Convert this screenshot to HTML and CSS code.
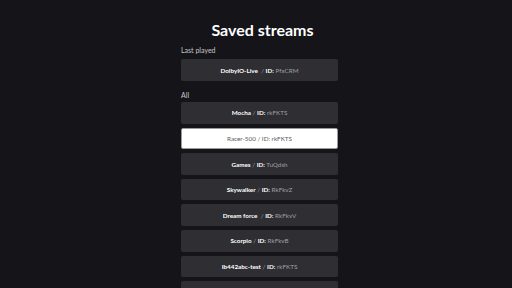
FILE: index.html
```html
<!DOCTYPE html>
<html>
<head>
<meta charset="utf-8">
<link rel="stylesheet" href="styles.css">
</head>
<body>
<div class="page">
  <h1 class="title">Saved streams</h1>
  <div class="label label-first">Last played</div>
  <div class="stream"><span class="text"><b>DolbyIO-Live</b><span class="sep">&nbsp; / </span><b>ID:</b> <span class="id">PfxCRM</span></span></div>
  <div class="label label-all">All</div>
  <div class="list">
    <div class="stream"><span class="text"><b>Mocha</b><span class="sep"> / </span><b>ID:</b> <span class="id">rkFKTS</span></span></div>
    <div class="stream active"><span class="text">Racer-500 / ID: rkFKTS</span></div>
    <div class="stream"><span class="text"><b>Games</b><span class="sep"> / </span><b>ID:</b> <span class="id">TuQdsh</span></span></div>
    <div class="stream"><span class="text"><b>Skywalker</b><span class="sep"> / </span><b>ID:</b> <span class="id">RkFkvZ</span></span></div>
    <div class="stream"><span class="text"><b>Dream force</b><span class="sep">&nbsp; / </span><b>ID:</b> <span class="id">RkFkvV</span></span></div>
    <div class="stream"><span class="text"><b>Scorpio</b><span class="sep"> / </span><b>ID:</b> <span class="id">RkFkvB</span></span></div>
    <div class="stream"><span class="text"><b>Ib442abc-test</b><span class="sep"> / </span><b>ID:</b> <span class="id">rkFKTS</span></span></div>
    <div class="stream"></div>
  </div>
</div>
</body>
</html>
```
FILE: styles.css
```css
html, body {
  margin: 0;
  padding: 0;
  background: #141419;
  height: 100%;
  overflow: hidden;
}
body {
  font-family: Lato, "Open Sans", sans-serif;
  color: #ffffff;
  padding-left: 7px;
}
.page {
  width: 157px;
  margin: 0 auto;
  padding-top: 20.4px;
}
.title {
  margin: 0;
  font-size: 16px;
  line-height: 19.2px;
  font-weight: 700;
  text-align: center;
  padding-left: 6px;
}
.label {
  font-size: 7px;
  line-height: 8.4px;
  color: #c8c8cc;
}
.label-first {
  margin-top: 6.5px;
  margin-bottom: 4.8px;
}
.label-all {
  margin-top: 10px;
  margin-bottom: 2.8px;
}
.list {
  display: flex;
  flex-direction: column;
  gap: 4px;
}
.stream {
  height: 21.6px;
  box-sizing: border-box;
  background: #2e2e33;
  border-radius: 2px;
  display: flex;
  align-items: center;
  justify-content: center;
  font-size: 6.3px;
  color: #ffffff;
}
.text {
  white-space: pre;
}
.stream b {
  font-weight: 700;
}
.sep, .id {
  color: #a0a0a6;
}
.stream.active {
  background: #ffffff;
  color: #5a5a5e;
  border: 0.6px solid #9a9aa0;
}
```
